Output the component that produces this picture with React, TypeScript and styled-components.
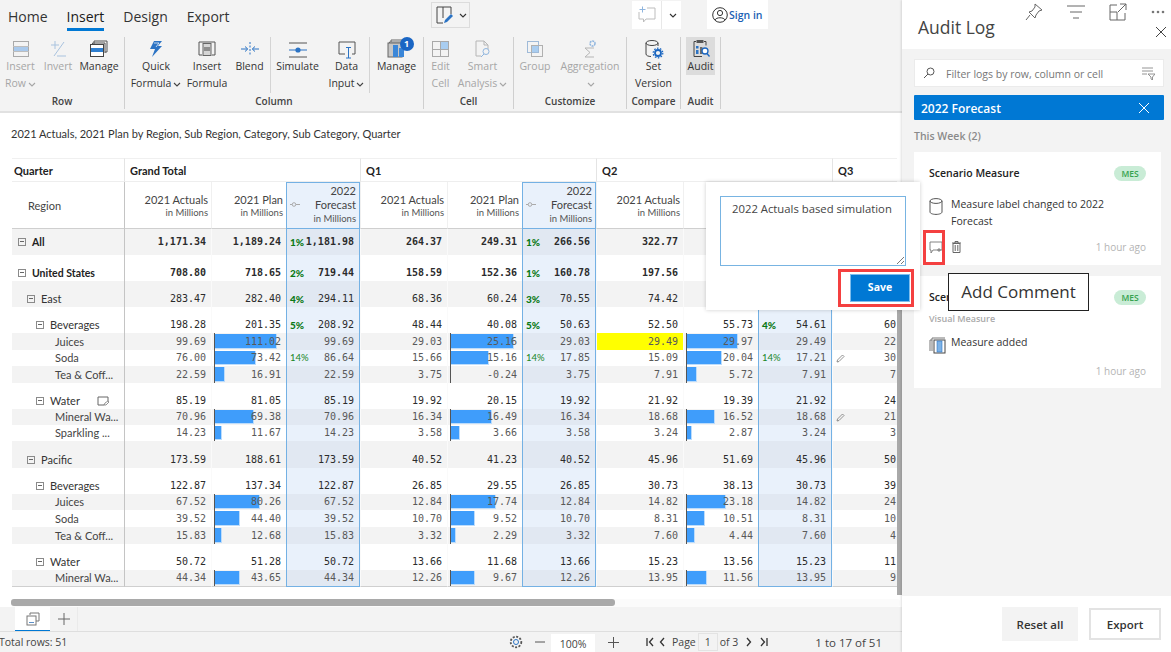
import React from 'react';
import styled, { createGlobalStyle } from 'styled-components';

const GlobalStyle = createGlobalStyle`
    html, body {
        margin: 0;
        padding: 0;
        height: 652px;
        overflow: hidden;
        background: #fff;
        font-family: 'Open Sans', sans-serif;
    }
`;

const TABLE_FONT = "Lato, 'Noto Sans', sans-serif";
const MONO = "'DejaVu Sans Mono', monospace";

const Page = styled.div`
    display: flex;
    position: relative;
    width: 1171px;
    height: 652px;
    overflow: hidden;
`;

const Main = styled.div`
    display: flex;
    flex-direction: column;
    width: 902px;
    height: 652px;
`;

/* ---- ribbon ---- */

const Ribbon = styled.div`
    height: 113px;
    flex: none;
    box-sizing: border-box;
    background: #f3f3f3;
    border-bottom: 2px solid #e1e1e1;
`;

const TopBar = styled.div`
    display: flex;
    height: 37px;
    align-items: flex-start;
`;

const Tabs = styled.div`
    display: flex;
    gap: 19px;
    width: 431px;
    padding-left: 8px;
    box-sizing: border-box;
`;

const Tab = styled.div<{ $active?: boolean }>`
    height: 22px;
    padding: 6px 0 0;
    line-height: 22px;
    font-size: 14px;
    color: ${props => (props.$active ? '#1a1a1a' : '#333')};
    border-bottom: ${props => (props.$active ? '3px solid #0078d4' : '3px solid transparent')};
`;

const FormatButton = styled.div`
    display: flex;
    align-items: center;
    justify-content: center;
    width: 39px;
    height: 26px;
    margin-top: 2px;
    box-sizing: border-box;
    border: 1px solid #dcdcdc;
`;

const CommentGroup = styled.div`
    display: flex;
    height: 28px;
    margin: 1px 0 0 162px;
    background: #fff;
`;

const CommentPart = styled.div<{ $w: number; $line?: boolean }>`
    display: flex;
    align-items: center;
    justify-content: center;
    width: ${props => props.$w}px;
    border-left: ${props => (props.$line ? '1px solid #e8e8e8' : 'none')};
`;

const SignIn = styled.div`
    display: flex;
    align-items: center;
    gap: 1px;
    width: 61px;
    height: 29px;
    margin: 0 0 0 26px;
    padding-left: 5px;
    box-sizing: border-box;
    background: #fff;
    font-size: 10.5px;
    font-weight: 600;
    color: #1b5fb4;
`;

const RibbonBody = styled.div`
    display: flex;
    height: 72px;
`;

const Group = styled.div<{ $w: number }>`
    display: flex;
    flex-direction: column;
    width: ${props => props.$w}px;
    flex: none;
    box-sizing: border-box;
    border-right: 1px solid #cfcfcf;
`;

const GroupItems = styled.div<{ $pad?: number }>`
    display: flex;
    height: 56px;
    padding-left: ${props => props.$pad || 0}px;
`;

const GroupLabel = styled.div`
    height: 16px;
    line-height: 16px;
    text-align: center;
    font-size: 10px;
    font-weight: 600;
    color: #444;
`;

const InnerBreak = styled.div`
    width: 1px;
    height: 56px;
    flex: none;
    background: #d4d4d4;
`;

const RibbonButton = styled.div<{ $w: number; $off?: boolean; $on?: boolean }>`
    display: flex;
    flex-direction: column;
    align-items: center;
    width: ${props => props.$w}px;
    height: ${props => (props.$on ? 38 : 56)}px;
    flex: none;
    font-size: 10.5px;
    line-height: 17px;
    white-space: nowrap;
    color: ${props => (props.$off ? '#a6a6a6' : '#333')};
    background: ${props => (props.$on ? '#dcdcdc' : 'transparent')};
`;

const IconSlot = styled.div`
    display: flex;
    align-items: center;
    justify-content: center;
    position: relative;
    height: 20px;
    margin: 2px 0 0;
`;

const Badge = styled.div`
    position: absolute;
    top: -2px;
    right: -7px;
    width: 14px;
    height: 14px;
    line-height: 14px;
    text-align: center;
    border-radius: 50%;
    background: #1a66c4;
    color: #fff;
    font-size: 9px;
    font-weight: 700;
`;

const LineOne = styled.div`
    margin-top: -1px;
`;

const Chevron = ({ c = '#555', w = 8 }: { c?: string; w?: number }) => (
    <svg width={w} height={5} viewBox="0 0 8 5" fill="none" style={{ marginLeft: 2 }}>
        <path d="M1 1l3 3 3-3" stroke={c} strokeWidth="1.1" />
    </svg>
);

const Svg = ({ children, w = 20, h = 20 }: { children: React.ReactNode; w?: number; h?: number }) => (
    <svg width={w} height={h} viewBox={`0 0 ${w} ${h}`} fill="none">
        {children}
    </svg>
);

const IconInsertRow = () => (
    <Svg>
        <rect x="2.5" y="2.5" width="15" height="15" stroke="#a9a9a9" />
        <rect x="3" y="7" width="14" height="6" fill="#a9c9ec" />
        <path d="M2 7.5h16M2 12.5h16" stroke="#bdbdbd" />
    </Svg>
);
const IconInvert = () => (
    <Svg>
        <path d="M3 6h8M7 2v8M9 17h9M6 17L16 3" stroke="#a9c3df" />
    </Svg>
);
const IconManage = () => (
    <Svg>
        <path d="M5 5V2h13v11h-2M3.5 6.5V4H16v10" stroke="#555" />
        <rect x="1.5" y="5.5" width="13" height="12" fill="#fff" stroke="#444" />
        <rect x="2" y="9" width="12" height="4" fill="#2f7fd1" />
    </Svg>
);
const IconBolt = () => (
    <Svg>
        <path d="M8 2h8l-4 5h4L6 18l3-8H4z" fill="#2b73c4" />
        <path d="M8 4h5l-3 4" stroke="#fff" strokeWidth=".7" />
    </Svg>
);
const IconInsertFormula = () => (
    <Svg>
        <path d="M5 16H2V3h16v13h-3" stroke="#555" />
        <rect x="6" y="4.5" width="8" height="12" fill="#d5d5d5" stroke="#666" />
        <rect x="7" y="8" width="6" height="4" fill="#8d8d8d" />
    </Svg>
);
const IconBlend = () => (
    <Svg>
        <path d="M1 10h6M5 7.5L7.8 10 5 12.5M19 10h-6M15 7.5L12.2 10l2.8 2.5" stroke="#2b73c4" />
        <path d="M10 3v14" stroke="#2b73c4" strokeDasharray="2 1.5" />
    </Svg>
);
const IconSimulate = () => (
    <Svg>
        <path d="M1 4h18M1 18h18" stroke="#555" />
        <path d="M1 11h18" stroke="#2b73c4" />
        <circle cx="10" cy="11" r="2.6" fill="#2b73c4" />
    </Svg>
);
const IconDataInput = () => (
    <Svg>
        <path d="M8 15H2V3h16v12h-3" stroke="#555" />
        <path d="M9 8.5h5M9 19h5M11.5 8.5V19" stroke="#2b73c4" />
    </Svg>
);
const IconManageColumns = () => (
    <Svg>
        <path d="M4 3V1h13v3M2.5 5V3h12" stroke="#666" />
        <rect x="1" y="4" width="14" height="14" fill="#c5c5c5" stroke="#666" />
        <rect x="6" y="6" width="5" height="12" fill="#3a86d8" />
        <rect x="12" y="9" width="5" height="9" fill="#3a86d8" />
    </Svg>
);
const IconEditCell = () => (
    <Svg>
        <rect x="1.5" y="2.5" width="16" height="15" stroke="#a9a9a9" />
        <rect x="9" y="3" width="8" height="8" fill="#a9cdf0" />
        <path d="M9.5 2v16M1.5 10.5h16" stroke="#a9a9a9" />
    </Svg>
);
const IconSmart = () => (
    <Svg>
        <path d="M8 17H3V2h8l4 4v4M11 2v4h4" stroke="#b5b5b5" />
        <circle cx="13" cy="12.5" r="3" stroke="#8fb5de" />
        <path d="M11 15l-3 3" stroke="#8fb5de" />
    </Svg>
);
const IconGroup = () => (
    <Svg>
        <rect x="2.5" y="2.5" width="11" height="11" stroke="#9fbad8" />
        <rect x="6.5" y="6.5" width="11" height="11" stroke="#b0b0b0" />
        <rect x="7" y="7" width="6" height="6" fill="#a9cdf0" />
    </Svg>
);
const IconAggregation = () => (
    <Svg>
        <path d="M14 9H5l5 4.5L5 18h9" stroke="#b5b5b5" />
        <circle cx="12.5" cy="4.5" r="2.5" stroke="#8fb5de" strokeWidth="1.5" strokeDasharray="2 .8" />
    </Svg>
);
const IconSetVersion = () => (
    <Svg>
        <path d="M2 4v11c0 1.6 2.5 2.5 5 2.5M14 4v3" stroke="#444" />
        <ellipse cx="8" cy="4" rx="6" ry="2.5" stroke="#444" />
        <circle cx="14" cy="14" r="3" stroke="#1b66c0" strokeWidth="1.8" />
        <circle cx="14" cy="14" r="4.8" stroke="#1b66c0" strokeWidth="1.2" strokeDasharray="1.6 1.4" />
    </Svg>
);
const IconAudit = () => (
    <Svg>
        <path d="M5 2.5H3v15h8M13 2.5h2v4" stroke="#444" />
        <rect x="5.5" y="1" width="7" height="3" fill="#555" />
        <rect x="5" y="7" width="2.5" height="2.5" fill="#2b73c4" />
        <rect x="5" y="11" width="2.5" height="4" fill="#2b73c4" />
        <rect x="9" y="8" width="2.5" height="7" fill="#6d6d6d" />
        <circle cx="14" cy="12" r="3" fill="#fff" stroke="#1b66c0" strokeWidth="1.3" />
        <path d="M16 14.5l2.5 3" stroke="#1b66c0" strokeWidth="1.3" />
    </Svg>
);
const IconFormat = () => (
    <Svg w={22} h={20}>
        <path d="M8 18H2V2h14v7M8 2v11" stroke="#444" />
        <path d="M9 18l1-3 6-6 2 2-6 6z" fill="#2b73c4" />
    </Svg>
);
const IconAddComment = () => (
    <Svg w={18} h={18}>
        <path d="M9 2h8v11H8l-2.5 3v-3H1V6" stroke="#bdbdbd" />
        <path d="M1.5 3.5h6M4.500 .5v6" stroke="#8fb5de" />
    </Svg>
);
const IconUser = () => (
    <svg width={16} height={16} viewBox="0 0 16 16" fill="none">
        <circle cx="8" cy="8" r="7.3" stroke="#333" />
        <circle cx="8" cy="6" r="2.6" stroke="#333" />
        <path d="M3 13c1-3 9-3 10 0" stroke="#333" />
    </svg>
);

type RibbonItem = {
    w: number;
    icon: React.ReactNode;
    one: string;
    two?: string;
    chevron?: boolean;
    off?: boolean;
    on?: boolean;
};

const ItemView = ({ item }: { item: RibbonItem }) => (
    <RibbonButton $w={item.w} $off={item.off} $on={item.on}>
        <IconSlot>{item.icon}</IconSlot>
        <LineOne>{item.one}</LineOne>
        {(item.two || item.chevron) && (
            <div>
                {item.two}
                {item.chevron && <Chevron c={item.off ? '#a6a6a6' : '#444'} />}
            </div>
        )}
    </RibbonButton>
);

const AuditSlot = styled.div`
    padding-left: 5px;
`;

const RibbonRow = () => (
    <RibbonBody>
        <Group $w={125}>
            <GroupItems>
                <ItemView item={{ w: 41, icon: <IconInsertRow />, one: 'Insert', two: 'Row', chevron: true, off: true }} />
                <ItemView item={{ w: 34, icon: <IconInvert />, one: 'Invert', off: true }} />
                <ItemView item={{ w: 48, icon: <IconManage />, one: 'Manage' }} />
            </GroupItems>
            <GroupLabel>Row</GroupLabel>
        </Group>
        <Group $w={299}>
            <GroupItems $pad={2}>
                <ItemView item={{ w: 58, icon: <IconBolt />, one: 'Quick', two: 'Formula', chevron: true }} />
                <ItemView item={{ w: 44, icon: <IconInsertFormula />, one: 'Insert', two: 'Formula' }} />
                <ItemView item={{ w: 41, icon: <IconBlend />, one: 'Blend' }} />
                <InnerBreak />
                <ItemView item={{ w: 53, icon: <IconSimulate />, one: 'Simulate' }} />
                <ItemView item={{ w: 45, icon: <IconDataInput />, one: 'Data', two: 'Input', chevron: true }} />
                <InnerBreak />
                <ItemView
                    item={{
                        w: 53,
                        icon: (
                            <>
                                <IconManageColumns />
                                <Badge>1</Badge>
                            </>
                        ),
                        one: 'Manage',
                    }}
                />
            </GroupItems>
            <GroupLabel>Column</GroupLabel>
        </Group>
        <Group $w={90}>
            <GroupItems>
                <ItemView item={{ w: 33, icon: <IconEditCell />, one: 'Edit', two: 'Cell', off: true }} />
                <ItemView item={{ w: 51, icon: <IconSmart />, one: 'Smart', two: 'Analysis', chevron: true, off: true }} />
            </GroupItems>
            <GroupLabel>Cell</GroupLabel>
        </Group>
        <Group $w={113}>
            <GroupItems>
                <ItemView item={{ w: 42, icon: <IconGroup />, one: 'Group', off: true }} />
                <ItemView item={{ w: 68, icon: <IconAggregation />, one: 'Aggregation', chevron: true, off: true }} />
            </GroupItems>
            <GroupLabel>Customize</GroupLabel>
        </Group>
        <Group $w={54}>
            <GroupItems>
                <ItemView item={{ w: 53, icon: <IconSetVersion />, one: 'Set', two: 'Version' }} />
            </GroupItems>
            <GroupLabel>Compare</GroupLabel>
        </Group>
        <Group $w={40}>
            <GroupItems>
                <AuditSlot>
                    <ItemView item={{ w: 29, icon: <IconAudit />, one: 'Audit', on: true }} />
                </AuditSlot>
            </GroupItems>
            <GroupLabel>Audit</GroupLabel>
        </Group>
    </RibbonBody>
);

/* ---- table ---- */

const TitleBar = styled.div`
    height: 45px;
    flex: none;
    box-sizing: border-box;
    padding: 12px 0 0 11px;
    line-height: 17px;
    font-family: ${TABLE_FONT};
    font-size: 11px;
    color: #333;
`;

const TableArea = styled.div`
    display: flex;
    height: 440px;
    flex: none;
`;

const Viewport = styled.div`
    width: 885px;
    margin-left: 12px;
    height: 440px;
    overflow: hidden;
    flex: none;
`;

const VScroll = styled.div`
    width: 5px;
    flex: none;
    padding-top: 120px;
`;

const VThumb = styled.div`
    height: 317px;
    background: #a9a9a9;
`;

const Grid = styled.table`
    width: 1063px;
    table-layout: fixed;
    border-collapse: separate;
    border-spacing: 0;
    font-family: ${TABLE_FONT};
    color: #333;
`;

const GroupHead = styled.th<{ $first?: boolean }>`
    height: 22px;
    padding: 0 0 0 ${props => (props.$first ? 2 : 5)}px;
    text-align: left;
    font-size: 11px;
    font-weight: 700;
    color: #222;
    border-top: 1px solid #f0f0f0;
    border-bottom: 1px solid #eee;
    border-left: ${props => (props.$first ? 'none' : '1px solid #e4e4e4')};
`;

const RegionHead = styled.th`
    height: 46px;
    padding: 0 0 0 16px;
    text-align: left;
    font-size: 11px;
    font-weight: 400;
    color: #444;
    border-bottom: 1px solid #cfcfcf;
`;

const MeasureHead = styled.th<{ $start?: boolean; $forecast?: boolean }>`
    position: relative;
    height: 47px;
    padding: ${props => (props.$forecast ? '0 3px 3px 0' : '2px 3px 0 0')};
    box-sizing: border-box;
    text-align: right;
    font-size: 11px;
    font-weight: 400;
    line-height: ${props => (props.$forecast ? 14 : 13)}px;
    color: #444;
    background: ${props => (props.$forecast ? '#e9f1fb' : '#fff')};
    border-bottom: 1px solid ${props => (props.$forecast ? '#74b1e4' : '#cfcfcf')};
    border-left: 1px solid ${props => (props.$forecast ? '#74b1e4' : props.$start ? '#c4c4c4' : '#f0f0f0')};
    border-right: ${props => (props.$forecast ? '1px solid #74b1e4' : 'none')};
    border-top: ${props => (props.$forecast ? '1px solid #74b1e4' : 'none')};
`;

const Units = styled.div`
    font-size: 9.5px;
    line-height: 13px;
    color: #555;
`;

const PinMark = styled.span`
    position: absolute;
    left: 3px;
    top: 19px;
    line-height: 0;
`;

const LabelCell = styled.td<{ $level: number; $strong?: boolean; $mid?: boolean; $grey: boolean; $last?: boolean }>`
    padding: 0 0 0 ${props => 6 + props.$level * 9}px;
    white-space: nowrap;
    overflow: hidden;
    vertical-align: ${props => (props.$mid ? 'middle' : 'bottom')};
    line-height: 16px;
    font-size: ${props => (props.$strong ? 10.5 : 11)}px;
    font-weight: ${props => (props.$strong ? 700 : 400)};
    color: ${props => (props.$strong ? '#222' : '#333')};
    background: ${props => (props.$grey ? '#f3f3f3' : '#fff')};
    border-bottom: ${props => (props.$last ? '1px solid #cfcfcf' : 'none')};
`;

const LeafLabel = styled.span`
    padding-left: 19px;
    color: #444;
`;

const LabelRow = styled.span`
    display: inline-flex;
    align-items: center;
    gap: 6px;
`;

const Toggle = styled.span`
    display: inline-block;
    position: relative;
    width: 6px;
    height: 6px;
    border: 1px solid #8a8a8a;
`;

const ToggleDash = styled.span`
    position: absolute;
    left: 1px;
    top: 2px;
    width: 4px;
    height: 1px;
    background: #666;
`;

const NoteMark = styled.span`
    line-height: 0;
    margin-left: 11px;
`;

const NumCell = styled.td<{
    $grey: boolean;
    $mid?: boolean;
    $start?: boolean;
    $split?: boolean;
    $forecast?: boolean;
    $strong?: boolean;
    $dim?: boolean;
    $hit?: boolean;
    $last?: boolean;
}>`
    position: relative;
    padding: 0 5px 0 0;
    text-align: right;
    vertical-align: ${props => (props.$mid ? 'middle' : 'bottom')};
    line-height: 16px;
    font-family: ${MONO};
    font-size: 10px;
    font-weight: ${props => (props.$strong ? 700 : 400)};
    color: ${props => (props.$dim ? '#595959' : '#2b2b2b')};
    white-space: nowrap;
    background: ${props => {
        if (props.$hit) return '#ffff00';
        if (props.$forecast) return props.$grey ? '#e1e8f2' : '#e9f1fb';
        return props.$grey ? '#f3f3f3' : '#fff';
    }};
    border-left: ${props => {
        if (props.$forecast) return '1px solid #74b1e4';
        if (props.$start) return '1px solid #c4c4c4';
        if (props.$split) return '1px solid #fafafa';
        return 'none';
    }};
    border-right: ${props => (props.$forecast ? '1px solid #74b1e4' : 'none')};
    border-bottom: ${props => {
        if (props.$forecast && props.$last) return '1px solid #74b1e4';
        return props.$last ? '1px solid #cfcfcf' : 'none';
    }};
`;

const Axis = styled.span`
    position: absolute;
    left: 2px;
    top: 0;
    bottom: 0;
    width: 1px;
    background: #555;
`;

const Bar = styled.span`
    position: absolute;
    left: 3px;
    top: 1px;
    bottom: 1px;
    box-sizing: border-box;
    background: #3f9dfb;
    border-right: 1px solid #bcdcfb;
    border-bottom: 1px solid #bcdcfb;
`;

const NumText = styled.span`
    position: relative;
`;

const Pct = styled.span<{ $strong?: boolean }>`
    position: absolute;
    left: 3px;
    font-family: ${TABLE_FONT};
    font-size: ${props => (props.$strong ? 10 : 9.5)}px;
    font-weight: ${props => (props.$strong ? 900 : 400)};
    color: ${props => (props.$strong ? '#0b7a17' : '#17861f')};
`;

const PencilMark = styled.span`
    position: absolute;
    left: 3px;
    bottom: 3px;
    line-height: 0;
`;

const Q3Value = styled.span`
    display: inline-block;
    width: 81px;
    margin-right: 157px;
    text-align: right;
`;

type Cell = { a: string; p: string; f: string; pct?: string; bar?: number; hit?: boolean };

type Row = {
    label: string;
    level: number;
    h: number;
    leaf?: boolean;
    strong?: boolean;
    mid?: boolean;
    note?: boolean;
    grey: boolean;
    pencil?: boolean;
    q3: string;
    cells: Cell[];
};

const rows: Row[] = [
    {
        label: 'All', level: 0, h: 26, strong: true, mid: true, grey: true, q3: '301.42',
        cells: [
            { a: '1,171.34', p: '1,189.24', f: '1,181.98', pct: '1%' },
            { a: '264.37', p: '249.31', f: '266.56', pct: '1%' },
            { a: '322.77', p: '341.26', f: '330.12', pct: '2%' },
        ],
    },
    {
        label: 'United States', level: 0, h: 26, strong: true, grey: false, q3: '186.30',
        cells: [
            { a: '708.80', p: '718.65', f: '719.44', pct: '2%' },
            { a: '158.59', p: '152.36', f: '160.78', pct: '1%' },
            { a: '197.56', p: '207.60', f: '201.75', pct: '2%' },
        ],
    },
    {
        label: 'East', level: 1, h: 26, grey: true, q3: '80.18',
        cells: [
            { a: '283.47', p: '282.40', f: '294.11', pct: '4%' },
            { a: '68.36', p: '60.24', f: '70.55', pct: '3%' },
            { a: '74.42', p: '75.12', f: '76.53', pct: '3%' },
        ],
    },
    {
        label: 'Beverages', level: 2, h: 26, grey: false, q3: '60.24',
        cells: [
            { a: '198.28', p: '201.35', f: '208.92', pct: '5%' },
            { a: '48.44', p: '40.08', f: '50.63', pct: '5%' },
            { a: '52.50', p: '55.73', f: '54.61', pct: '4%' },
        ],
    },
    {
        label: 'Juices', level: 2, h: 17, leaf: true, grey: true, q3: '22.17',
        cells: [
            { a: '99.69', p: '111.02', f: '99.69', bar: 62 },
            { a: '29.03', p: '25.16', f: '29.03', bar: 63 },
            { a: '29.49', p: '29.97', f: '29.49', bar: 51, hit: true },
        ],
    },
    {
        label: 'Soda', level: 2, h: 16, leaf: true, grey: false, pencil: true, q3: '30.41',
        cells: [
            { a: '76.00', p: '73.42', f: '86.64', pct: '14%', bar: 41 },
            { a: '15.66', p: '15.16', f: '17.85', pct: '14%', bar: 38 },
            { a: '15.09', p: '20.04', f: '17.21', pct: '14%', bar: 35 },
        ],
    },
    {
        label: 'Tea & Coff...', level: 2, h: 17, leaf: true, grey: true, q3: '7.66',
        cells: [
            { a: '22.59', p: '16.91', f: '22.59', bar: 10 },
            { a: '3.75', p: '-0.24', f: '3.75', bar: 0 },
            { a: '7.91', p: '5.72', f: '7.91', bar: 10 },
        ],
    },
    {
        label: 'Water', level: 2, h: 26, note: true, grey: false, q3: '24.58',
        cells: [
            { a: '85.19', p: '81.05', f: '85.19' },
            { a: '19.92', p: '20.15', f: '19.92' },
            { a: '21.92', p: '19.39', f: '21.92' },
        ],
    },
    {
        label: 'Mineral Wa...', level: 2, h: 16, leaf: true, grey: true, pencil: true, q3: '21.37',
        cells: [
            { a: '70.96', p: '69.38', f: '70.96', bar: 39 },
            { a: '16.34', p: '16.49', f: '16.34', bar: 41 },
            { a: '18.68', p: '16.52', f: '18.68', bar: 28 },
        ],
    },
    {
        label: 'Sparkling ...', level: 2, h: 16, leaf: true, grey: false, q3: '3.21',
        cells: [
            { a: '14.23', p: '11.67', f: '14.23', bar: 7 },
            { a: '3.58', p: '3.66', f: '3.58', bar: 9 },
            { a: '3.24', p: '2.87', f: '3.24', bar: 5 },
        ],
    },
    {
        label: 'Pacific', level: 1, h: 27, grey: true, q3: '50.86',
        cells: [
            { a: '173.59', p: '188.61', f: '173.59' },
            { a: '40.52', p: '41.23', f: '40.52' },
            { a: '45.96', p: '51.69', f: '45.96' },
        ],
    },
    {
        label: 'Beverages', level: 2, h: 26, grey: false, q3: '39.10',
        cells: [
            { a: '122.87', p: '137.34', f: '122.87' },
            { a: '26.85', p: '29.55', f: '26.85' },
            { a: '30.73', p: '38.13', f: '30.73' },
        ],
    },
    {
        label: 'Juices', level: 2, h: 16, leaf: true, grey: true, q3: '24.65',
        cells: [
            { a: '67.52', p: '80.26', f: '67.52', bar: 45 },
            { a: '12.84', p: '17.74', f: '12.84', bar: 45 },
            { a: '14.82', p: '23.18', f: '14.82', bar: 39 },
        ],
    },
    {
        label: 'Soda', level: 2, h: 17, leaf: true, grey: false, q3: '10.02',
        cells: [
            { a: '39.52', p: '44.40', f: '39.52', bar: 25 },
            { a: '10.70', p: '9.52', f: '10.70', bar: 24 },
            { a: '8.31', p: '10.51', f: '8.31', bar: 18 },
        ],
    },
    {
        label: 'Tea & Coff...', level: 2, h: 17, leaf: true, grey: true, q3: '4.43',
        cells: [
            { a: '15.83', p: '12.68', f: '15.83', bar: 7 },
            { a: '3.32', p: '2.29', f: '3.32', bar: 5 },
            { a: '7.60', p: '4.44', f: '7.60', bar: 8 },
        ],
    },
    {
        label: 'Water', level: 2, h: 26, grey: false, q3: '11.52',
        cells: [
            { a: '50.72', p: '51.28', f: '50.72' },
            { a: '13.66', p: '11.68', f: '13.66' },
            { a: '15.23', p: '13.56', f: '15.23' },
        ],
    },
    {
        label: 'Mineral Wa...', level: 2, h: 16, leaf: true, grey: true, q3: '9.84',
        cells: [
            { a: '44.34', p: '43.65', f: '44.34', bar: 25 },
            { a: '12.26', p: '9.67', f: '12.26', bar: 24 },
            { a: '13.95', p: '11.56', f: '13.95', bar: 20 },
        ],
    },
];

const hasBar = (c: Cell) => c.bar !== undefined;

const DataGrid = () => (
    <Grid>
        <colgroup>
            <col width={112} />
            {[0, 1, 2].map(i => (
                <React.Fragment key={i}>
                    <col width={87} />
                    <col width={75} />
                    <col width={74} />
                </React.Fragment>
            ))}
            <col width={243} />
        </colgroup>
        <thead>
            <tr>
                <GroupHead $first>Quarter</GroupHead>
                <GroupHead colSpan={3}>Grand Total</GroupHead>
                <GroupHead colSpan={3}>Q1</GroupHead>
                <GroupHead colSpan={3}>Q2</GroupHead>
                <GroupHead>Q3</GroupHead>
            </tr>
            <tr>
                <RegionHead>Region</RegionHead>
                {[0, 1, 2].map(i => (
                    <React.Fragment key={i}>
                        <MeasureHead $start={i === 0}>
                            2021 Actuals
                            <Units>in Millions</Units>
                        </MeasureHead>
                        <MeasureHead>
                            2021 Plan
                            <Units>in Millions</Units>
                        </MeasureHead>
                        <MeasureHead $forecast>
                            <PinMark>
                                <svg width={10} height={5} viewBox="0 0 10 5" fill="none">
                                    <path d="M0 2.5h10" stroke="#aaa" />
                                    <circle cx="4" cy="2.5" r="1.8" fill="#e9f1fb" stroke="#aaa" />
                                </svg>
                            </PinMark>
                            2022
                            <br />
                            Forecast
                            <Units>in Millions</Units>
                        </MeasureHead>
                    </React.Fragment>
                ))}
                <MeasureHead />
            </tr>
        </thead>
        <tbody>
            {rows.map((row, r) => {
                const last = r === rows.length - 1;
                return (
                    <tr key={r} style={{ height: row.h }}>
                        <LabelCell $level={row.level} $strong={row.strong} $mid={row.mid} $grey={row.grey} $last={last}>
                            {row.leaf ? (
                                <LeafLabel>{row.label}</LeafLabel>
                            ) : (
                                <LabelRow>
                                    <Toggle>
                                        <ToggleDash />
                                    </Toggle>
                                    {row.label}
                                    {row.note && (
                                        <NoteMark>
                                            <svg width={12} height={10} viewBox="0 0 12 10" fill="none">
                                                <path d="M7 9H1V1h10v4" stroke="#666" />
                                                <path d="M7 9l1-2 3-2 1 1-3 3z" stroke="#666" strokeWidth=".7" />
                                            </svg>
                                        </NoteMark>
                                    )}
                                </LabelRow>
                            )}
                        </LabelCell>
                        {row.cells.map((cell, c) => (
                            <React.Fragment key={c}>
                                <NumCell
                                    $grey={row.grey}
                                    $mid={row.mid}
                                    $start={c === 0}
                                    $split={c > 0}
                                    $strong={row.strong}
                                    $dim={row.leaf}
                                    $hit={cell.hit}
                                    $last={last}
                                >
                                    {cell.a}
                                </NumCell>
                                <NumCell
                                    $grey={row.grey}
                                    $mid={row.mid}
                                    $split
                                    $strong={row.strong}
                                    $dim={row.leaf}
                                    $last={last}
                                >
                                    {hasBar(cell) && <Axis />}
                                    {!!cell.bar && <Bar style={{ width: cell.bar }} />}
                                    <NumText>{cell.p}</NumText>
                                </NumCell>
                                <NumCell
                                    $grey={row.grey}
                                    $mid={row.mid}
                                    $forecast
                                    $strong={row.strong}
                                    $dim={row.leaf}
                                    $last={last}
                                >
                                    {cell.pct && <Pct $strong={!row.leaf}>{cell.pct}</Pct>}
                                    {cell.f}
                                </NumCell>
                            </React.Fragment>
                        ))}
                        <NumCell $grey={row.grey} $mid={row.mid} $split $strong={row.strong} $dim={row.leaf} $last={last}>
                            {row.pencil && (
                                <PencilMark>
                                    <svg width={9} height={9} viewBox="0 0 9 9" fill="none">
                                        <path d="M1 8l.5-2L6.5 1 8 2.5 3 7.5z" stroke="#777" strokeWidth=".8" />
                                    </svg>
                                </PencilMark>
                            )}
                            <Q3Value>{row.q3}</Q3Value>
                        </NumCell>
                    </tr>
                );
            })}
        </tbody>
    </Grid>
);

/* ---- footer of the grid ---- */

const HScroll = styled.div`
    height: 8px;
    flex: none;
    box-sizing: border-box;
    margin: 1px 2px 0 11px;
    background: #fbfbfb;
    border-radius: 3px;
`;

const HThumb = styled.div`
    width: 604px;
    height: 7px;
    border-radius: 3px;
    background: #a9a9a9;
`;

const SheetBar = styled.div`
    display: flex;
    height: 24px;
    flex: none;
    box-sizing: border-box;
    background: #f3f3f3;
    padding-left: 15px;
`;

const SheetTab = styled.div`
    display: flex;
    align-items: center;
    justify-content: center;
    width: 35px;
    background: #fff;
    border-bottom: 1px solid #0078d4;
`;

const SheetAdd = styled.div`
    display: flex;
    align-items: center;
    justify-content: center;
    width: 27px;
    border-right: 1px solid #eaeaea;
`;

const StatusBar = styled.div`
    display: flex;
    align-items: center;
    flex: 1;
    background: #f3f3f3;
    border-top: 1px solid #dedede;
    font-size: 10.5px;
    color: #444;
`;

const TotalRows = styled.div`
    width: 510px;
    margin-left: -1px;
    flex: none;
`;

const ZoomBox = styled.div`
    width: 44px;
    height: 18px;
    margin: 2px 0 0 6px;
    line-height: 20px;
    text-align: center;
    background: #fff;
`;

const PageLabel = styled.div`
    margin-left: 5px;
`;

const PageBox = styled.div`
    width: 20px;
    height: 18px;
    box-sizing: border-box;
    margin: 0 2px;
    line-height: 17px;
    text-align: center;
    border: 1px solid #e3e3e3;
`;

const StatusGlyph = styled.div<{ $w: number; $l?: number }>`
    display: flex;
    justify-content: center;
    width: ${props => props.$w}px;
    margin-left: ${props => props.$l || 0}px;
    line-height: 0;
`;

const RangeText = styled.div`
    margin-left: 46px;
    font-size: 11.5px;
    white-space: nowrap;
`;

const Nav = ({ d }: { d: string }) => (
    <svg width={10} height={10} viewBox="0 0 10 10" fill="none">
        <path d={d} stroke="#333" strokeWidth="1.3" />
    </svg>
);

/* ---- audit panel ---- */

const Panel = styled.div`
    display: flex;
    flex-direction: column;
    width: 269px;
    height: 652px;
    flex: none;
    box-sizing: border-box;
    background: #fff;
    box-shadow: -1px 0 2px rgba(0, 0, 0, 0.12);
`;

const PanelHead = styled.div`
    position: relative;
    height: 49px;
    flex: none;
    padding: 15px 0 0 16px;
    box-sizing: border-box;
    font-size: 17.5px;
    line-height: 24px;
    color: #444;
`;

const PanelTools = styled.div`
    position: absolute;
    top: 3px;
    right: 6px;
    display: flex;
    align-items: center;
    gap: 24px;
    line-height: 0;
`;

const PanelClose = styled.div`
    position: absolute;
    top: 27px;
    right: 5px;
    line-height: 0;
`;

const PanelBody = styled.div`
    flex: 1;
    padding: 10px 7px 0 12px;
    background: #f3f3f3;
`;

const SearchBox = styled.div`
    display: flex;
    align-items: center;
    height: 28px;
    box-sizing: border-box;
    padding: 0 8px;
    background: #fff;
    border: 1px solid #ebebeb;
    font-size: 10.5px;
    color: #777;
`;

const SearchText = styled.div`
    flex: 1;
    margin-left: 11px;
    padding-top: 2px;
`;

const FilterChip = styled.div`
    display: flex;
    align-items: center;
    justify-content: space-between;
    height: 25px;
    margin-top: 8px;
    padding: 1px 15px 0 7px;
    box-sizing: border-box;
    background: #0078d4;
    border-radius: 1px;
    font-size: 12px;
    font-weight: 600;
    color: #fff;
`;

const WeekTitle = styled.div`
    margin: 9px 0 8px;
    line-height: 15px;
    font-size: 10.5px;
    font-weight: 600;
    color: #8a8a8a;
`;

const LogCard = styled.div<{ $h: number }>`
    position: relative;
    width: 247px;
    height: ${props => props.$h}px;
    margin-bottom: 11px;
    padding: 13px 15px 0;
    box-sizing: border-box;
    background: #fff;
`;

const CardHead = styled.div`
    display: flex;
    align-items: center;
    justify-content: space-between;
    font-size: 10.5px;
    font-weight: 600;
    color: #222;
    line-height: 16px;
`;

const Pill = styled.div`
    width: 32px;
    height: 15px;
    line-height: 15px;
    text-align: center;
    border-radius: 8px;
    background: #c9ecd6;
    font-size: 8.5px;
    font-weight: 600;
    color: #37a24f;
`;

const SubTitle = styled.div`
    margin-top: 7px;
    line-height: 14px;
    font-size: 9px;
    color: #aaa;
    font-weight: 600;
`;

const LogLine = styled.div<{ $top: number }>`
    display: flex;
    gap: 6px;
    margin-top: ${props => props.$top}px;
    font-size: 10.5px;
    line-height: 17px;
    color: #333;
`;

const LogIcon = styled.div`
    width: 16px;
    flex: none;
    padding-top: 2px;
    line-height: 0;
`;

const CardFoot = styled.div<{ $top: number }>`
    display: flex;
    align-items: center;
    margin-top: ${props => props.$top}px;
    height: 16px;
    font-size: 10px;
    color: #b4b4b4;
`;

const FootIcons = styled.div`
    display: flex;
    align-items: center;
    gap: 9px;
    flex: 1;
    line-height: 0;
`;

const FootTime = styled.div`
    margin-left: auto;
`;

const PanelFoot = styled.div`
    display: flex;
    align-items: center;
    justify-content: flex-end;
    gap: 11px;
    height: 56px;
    flex: none;
    padding-right: 10px;
    box-sizing: border-box;
    font-size: 11.5px;
    font-weight: 600;
    color: #333;
`;

const ResetButton = styled.div`
    width: 76px;
    height: 34px;
    line-height: 35px;
    text-align: center;
    background: #f3f3f3;
`;

const ExportButton = styled.div`
    width: 72px;
    height: 32px;
    line-height: 29px;
    box-sizing: border-box;
    text-align: center;
    border: 2px solid #e3e3e3;
`;

/* ---- things lying over the page ---- */

const CommentPopup = styled.div`
    position: absolute;
    left: 706px;
    top: 182px;
    width: 214px;
    height: 128px;
    box-sizing: border-box;
    padding: 14px 14px 0;
    background: #fff;
    box-shadow: 0 0 4px rgba(0, 0, 0, 0.2);
    z-index: 3;
`;

const CommentBox = styled.div`
    position: relative;
    height: 70px;
    box-sizing: border-box;
    padding: 3px 11px;
    border: 1px solid #78b4e2;
    font-size: 11.3px;
    line-height: 17px;
    color: #444;
`;

const ResizeMark = styled.div`
    position: absolute;
    right: 0;
    bottom: 0;
    line-height: 0;
`;

const SaveRow = styled.div`
    display: flex;
    justify-content: flex-end;
    margin: 8px -4px 0 0;
`;

const SaveButton = styled.div`
    width: 60px;
    height: 28px;
    box-sizing: border-box;
    line-height: 25px;
    text-align: center;
    background: #0078d4;
    border: 1px solid #7fbdec;
    font-size: 10.5px;
    font-weight: 700;
    color: #fff;
`;

const RedMark = styled.div<{ $x: number; $y: number; $w: number; $h: number }>`
    position: absolute;
    left: ${props => props.$x}px;
    top: ${props => props.$y}px;
    width: ${props => props.$w}px;
    height: ${props => props.$h}px;
    box-sizing: border-box;
    border: 3px solid #f44040;
    z-index: 4;
`;

const AddCommentTip = styled.div`
    position: absolute;
    left: 948px;
    top: 273px;
    width: 141px;
    height: 38px;
    box-sizing: border-box;
    line-height: 36px;
    text-align: center;
    background: #fff;
    border: 1px solid #222;
    font-size: 17px;
    color: #333;
    z-index: 4;
`;

const App = () => (
    <Page>
        <GlobalStyle />
        <Main>
            <Ribbon>
                <TopBar>
                    <Tabs>
                        <Tab>Home</Tab>
                        <Tab $active>Insert</Tab>
                        <Tab>Design</Tab>
                        <Tab>Export</Tab>
                    </Tabs>
                    <FormatButton>
                        <IconFormat />
                        <Chevron c="#333" />
                    </FormatButton>
                    <CommentGroup>
                        <CommentPart $w={29}>
                            <IconAddComment />
                        </CommentPart>
                        <CommentPart $w={19} $line>
                            <Chevron c="#333" />
                        </CommentPart>
                    </CommentGroup>
                    <SignIn>
                        <IconUser />
                        Sign in
                    </SignIn>
                </TopBar>
                <RibbonRow />
            </Ribbon>
            <TitleBar>2021 Actuals, 2021 Plan by Region, Sub Region, Category, Sub Category, Quarter</TitleBar>
            <TableArea>
                <Viewport>
                    <DataGrid />
                </Viewport>
                <VScroll>
                    <VThumb />
                </VScroll>
            </TableArea>
            <HScroll>
                <HThumb />
            </HScroll>
            <SheetBar>
                <SheetTab>
                    <svg width={14} height={14} viewBox="0 0 14 14" fill="none">
                        <path d="M4 3V1h9v8h-3" stroke="#777" />
                        <rect x="1" y="4" width="9" height="9" fill="#fff" stroke="#777" />
                        <path d="M3 10.5h5" stroke="#5b8fc7" />
                    </svg>
                </SheetTab>
                <SheetAdd>
                    <svg width={12} height={12} viewBox="0 0 12 12" fill="none">
                        <path d="M6 0v12M0 6h12" stroke="#666" />
                    </svg>
                </SheetAdd>
            </SheetBar>
            <StatusBar>
                <TotalRows>Total rows: 51</TotalRows>
                <StatusGlyph $w={14}>
                    <svg width={14} height={14} viewBox="0 0 14 14" fill="none">
                        <circle cx="7" cy="7" r="2.5" stroke="#2b73c4" />
                        <circle cx="7" cy="7" r="5.3" stroke="#555" strokeWidth="1.8" strokeDasharray="2 1.5" />
                    </svg>
                </StatusGlyph>
                <StatusGlyph $w={10} $l={12}>
                    <svg width={10} height={2} viewBox="0 0 10 2" fill="none">
                        <path d="M0 1h10" stroke="#555" />
                    </svg>
                </StatusGlyph>
                <ZoomBox>100%</ZoomBox>
                <StatusGlyph $w={11} $l={13}>
                    <svg width={11} height={11} viewBox="0 0 11 11" fill="none">
                        <path d="M5.5 0v11M0 5.5h11" stroke="#555" />
                    </svg>
                </StatusGlyph>
                <StatusGlyph $w={12} $l={26}>
                    <Nav d="M1 1v8M7 1L3.5 5 7 9" />
                </StatusGlyph>
                <StatusGlyph $w={10}>
                    <Nav d="M7 1L3.5 5 7 9" />
                </StatusGlyph>
                <PageLabel>Page</PageLabel>
                <PageBox>1</PageBox>
                <div>of 3</div>
                <StatusGlyph $w={10} $l={6}>
                    <Nav d="M3 1l3.5 4L3 9" />
                </StatusGlyph>
                <StatusGlyph $w={12} $l={3}>
                    <Nav d="M9 1v8M3 1l3.5 4L3 9" />
                </StatusGlyph>
                <RangeText>1 to 17 of 51</RangeText>
            </StatusBar>
        </Main>
        <Panel>
            <PanelHead>
                Audit Log
                <PanelTools>
                    <svg width={18} height={18} viewBox="0 0 18 18" fill="none">
                        <path d="M10 1l7 6-3 1-3 4-1 3-6-6 3-1 3-4zM5 12l-4 5" stroke="#666" />
                    </svg>
                    <svg width={18} height={14} viewBox="0 0 18 14" fill="none">
                        <path d="M0 1h18M3 7h12M6 13h6" stroke="#666" />
                    </svg>
                    <svg width={18} height={18} viewBox="0 0 18 18" fill="none">
                        <path d="M8 2H1v15h15v-7M11 1h6v6M17 1l-8 8" stroke="#666" />
                        <path d="M1 9h7v8" stroke="#666" />
                    </svg>
                    <svg width={14} height={4} viewBox="0 0 14 4" fill="#777">
                        <circle cx="2" cy="2" r="1.3" />
                        <circle cx="7" cy="2" r="1.3" />
                        <circle cx="12" cy="2" r="1.3" />
                    </svg>
                </PanelTools>
                <PanelClose>
                    <svg width={10} height={10} viewBox="0 0 10 10" fill="none">
                        <path d="M0 0l10 10M10 0L0 10" stroke="#444" />
                    </svg>
                </PanelClose>
            </PanelHead>
            <PanelBody>
                <SearchBox>
                    <svg width={12} height={12} viewBox="0 0 12 12" fill="none">
                        <circle cx="7.5" cy="4.5" r="3.5" stroke="#555" />
                        <path d="M5 7l-4 4" stroke="#555" />
                    </svg>
                    <SearchText>Filter logs by row, column or cell</SearchText>
                    <svg width={13} height={13} viewBox="0 0 13 13" fill="none">
                        <path d="M0 1h11M0 4h11M0 7h5M6 7h7L10.5 10v3L9 12v-2z" stroke="#888" strokeWidth=".9" />
                    </svg>
                </SearchBox>
                <FilterChip>
                    2022 Forecast
                    <svg width={10} height={10} viewBox="0 0 10 10" fill="none">
                        <path d="M0 0l10 10M10 0L0 10" stroke="#fff" />
                    </svg>
                </FilterChip>
                <WeekTitle>This Week (2)</WeekTitle>
                <LogCard $h={113}>
                    <CardHead>
                        Scenario Measure
                        <Pill>MES</Pill>
                    </CardHead>
                    <LogLine $top={15}>
                        <LogIcon>
                            <svg width={14} height={17} viewBox="0 0 14 17" fill="none">
                                <ellipse cx="7" cy="3" rx="6" ry="2.4" stroke="#555" />
                                <path d="M1 3v11c0 1.3 2.5 2.4 6 2.4s6-1.1 6-2.400V3" stroke="#555" />
                            </svg>
                        </LogIcon>
                        <div>Measure label changed to 2022 Forecast</div>
                    </LogLine>
                    <CardFoot $top={9}>
                        <FootIcons>
                            <svg width={14} height={13} viewBox="0 0 14 13" fill="none">
                                <path d="M1 1h12v8H4l-2 3V9H1zM8 9h4M10 7v4" stroke="#777" strokeWidth=".9" />
                            </svg>
                            <svg width={9} height={12} viewBox="0 0 9 12" fill="none">
                                <path d="M0 2h9M3 2V.5h3V2" stroke="#666" />
                                <path d="M1 2.5h7V11.5H1zM3.2 4v6M5.8 4v6" stroke="#666" />
                            </svg>
                        </FootIcons>
                        <FootTime>1 hour ago</FootTime>
                    </CardFoot>
                </LogCard>
                <LogCard $h={112}>
                    <CardHead>
                        Scenario Measure
                        <Pill>MES</Pill>
                    </CardHead>
                    <SubTitle>Visual Measure</SubTitle>
                    <LogLine $top={8}>
                        <LogIcon>
                            <svg width={17} height={18} viewBox="0 0 17 18" fill="none">
                                <path d="M3 15V2h13M1 15V4h2" stroke="#777" />
                                <rect x="5" y="4" width="11" height="13" fill="#fff" stroke="#444" />
                                <rect x="8" y="5" width="5" height="11" fill="#7db2e6" stroke="#2b73c4" strokeWidth=".6" />
                            </svg>
                        </LogIcon>
                        <div>Measure added</div>
                    </LogLine>
                    <CardFoot $top={9}>
                        <FootTime>1 hour ago</FootTime>
                    </CardFoot>
                </LogCard>
            </PanelBody>
            <PanelFoot>
                <ResetButton>Reset all</ResetButton>
                <ExportButton>Export</ExportButton>
            </PanelFoot>
        </Panel>
        <CommentPopup>
            <CommentBox>
                2022 Actuals based simulation
                <ResizeMark>
                    <svg width={9} height={9} viewBox="0 0 9 9" fill="none">
                        <path d="M1 8l7-7M5 8l3-3" stroke="#555" strokeWidth=".8" />
                    </svg>
                </ResizeMark>
            </CommentBox>
            <SaveRow>
                <SaveButton>Save</SaveButton>
            </SaveRow>
        </CommentPopup>
        <RedMark $x={838} $y={269} $w={76} $h={38} />
        <RedMark $x={923} $y={230} $w={22} $h={35} />
        <AddCommentTip>Add Comment</AddCommentTip>
    </Page>
);

export default App;
